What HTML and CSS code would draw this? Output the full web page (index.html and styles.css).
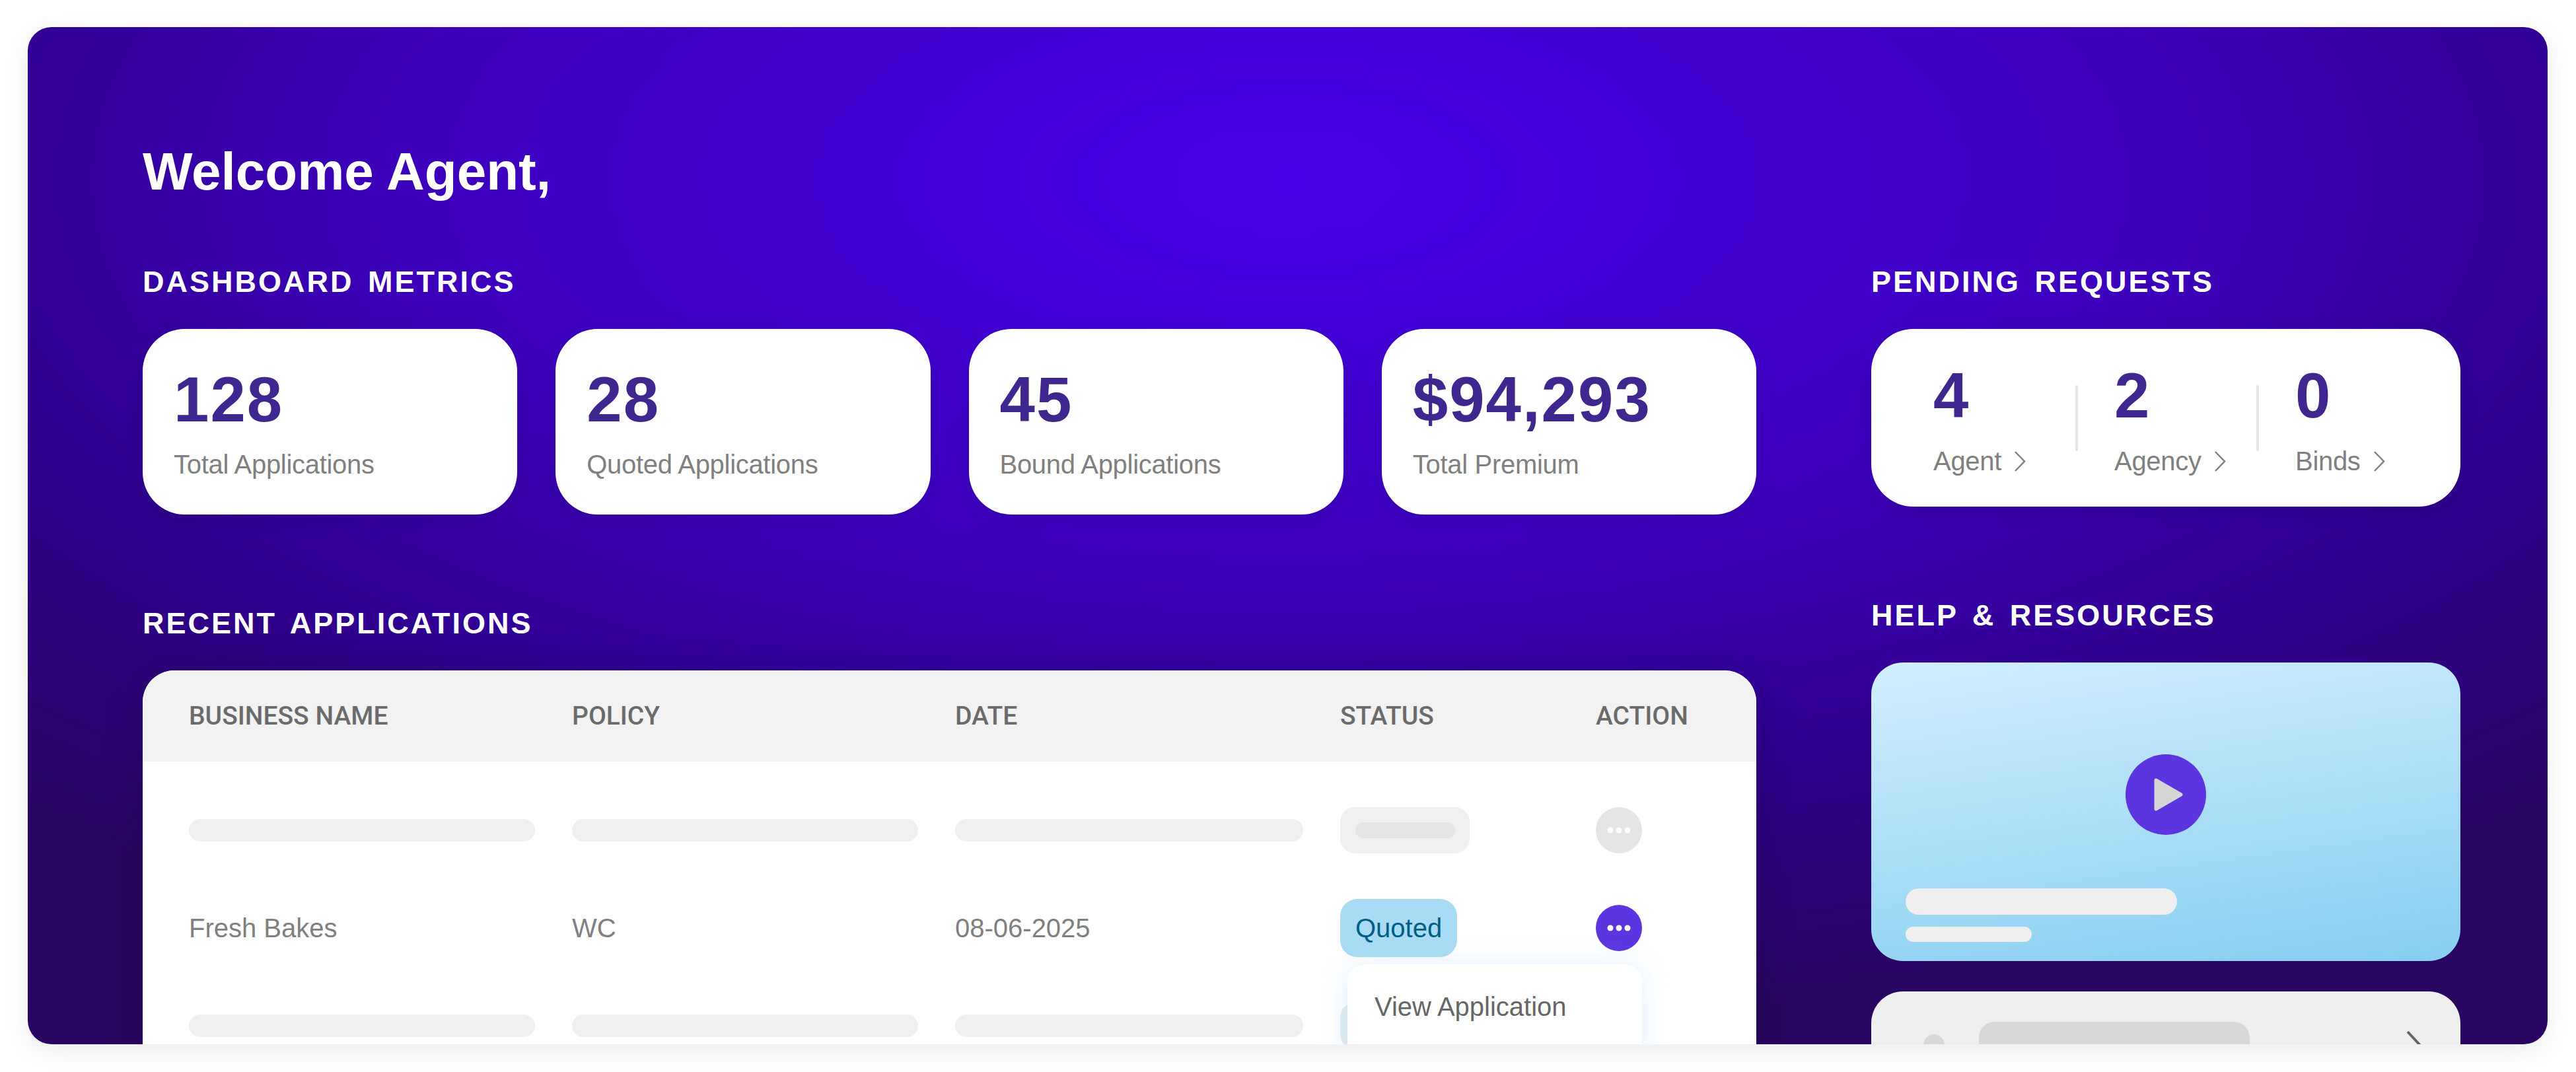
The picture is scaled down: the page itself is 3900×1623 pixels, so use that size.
FILE: index.html
```html
<!DOCTYPE html>
<html lang="en">
<head>
    <meta charset="UTF-8">
    <meta name="viewport" content="width=device-width, initial-scale=1.0">
    <title>Agent dashboard</title>
    <link rel="stylesheet" href="styles.css">
</head>
<body>
    <div class="frame">
        <div class="left-col">
            <h1 class="welcome">Welcome Agent,</h1>
            <h2 class="section-title">DASHBOARD METRICS</h2>
            <div class="metrics">
                <div class="metric-card">
                    <div class="metric-value">128</div>
                    <div class="metric-label">Total Applications</div>
                </div>
                <div class="metric-card">
                    <div class="metric-value">28</div>
                    <div class="metric-label">Quoted Applications</div>
                </div>
                <div class="metric-card">
                    <div class="metric-value">45</div>
                    <div class="metric-label">Bound Applications</div>
                </div>
                <div class="metric-card">
                    <div class="metric-value">$94,293</div>
                    <div class="metric-label">Total Premium</div>
                </div>
            </div>

            <h2 class="section-title section-title-lower">RECENT APPLICATIONS</h2>
            <div class="table-card">
                <div class="table-head table-grid">
                    <div>BUSINESS NAME</div>
                    <div>POLICY</div>
                    <div>DATE</div>
                    <div>STATUS</div>
                    <div>ACTION</div>
                </div>
                <div class="table-body">
                    <div class="table-row table-grid">
                        <div class="skeleton-bar"></div>
                        <div class="skeleton-bar"></div>
                        <div class="skeleton-bar"></div>
                        <div class="skeleton-pill"><div class="skeleton-pill-inner"></div></div>
                        <div class="action-btn action-btn-off">
                            <svg width="36" height="10" viewBox="0 0 36 10"><circle cx="5" cy="5" r="4.5" fill="#fff"/><circle cx="18" cy="5" r="4.5" fill="#fff"/><circle cx="31" cy="5" r="4.5" fill="#fff"/></svg>
                        </div>
                    </div>
                    <div class="table-row table-grid">
                        <div>Fresh Bakes</div>
                        <div>WC</div>
                        <div>08-06-2025</div>
                        <div class="status-quoted">Quoted</div>
                        <div class="action-btn">
                            <svg width="36" height="10" viewBox="0 0 36 10"><circle cx="5" cy="5" r="4.5" fill="#fff"/><circle cx="18" cy="5" r="4.5" fill="#fff"/><circle cx="31" cy="5" r="4.5" fill="#fff"/></svg>
                        </div>
                    </div>
                    <div class="table-row table-grid">
                        <div class="skeleton-bar"></div>
                        <div class="skeleton-bar"></div>
                        <div class="skeleton-bar"></div>
                        <div class="skeleton-pill skeleton-pill-tint"></div>
                        <div></div>
                    </div>
                </div>
                <div class="row-menu">
                    <div class="row-menu-item">View Application</div>
                </div>
            </div>
        </div>

        <div class="right-col">
            <h2 class="section-title">PENDING REQUESTS</h2>
            <div class="pending-card">
                <div class="pending-item">
                    <div class="metric-value">4</div>
                    <div class="pending-label">Agent
                        <svg width="18" height="31" viewBox="0 0 18 31"><path d="M2 1 L16 15.5 L2 30" fill="none" stroke="#808080" stroke-width="2.5"/></svg>
                    </div>
                </div>
                <div class="pending-divider"></div>
                <div class="pending-item">
                    <div class="metric-value">2</div>
                    <div class="pending-label">Agency
                        <svg width="18" height="31" viewBox="0 0 18 31"><path d="M2 1 L16 15.5 L2 30" fill="none" stroke="#808080" stroke-width="2.5"/></svg>
                    </div>
                </div>
                <div class="pending-divider"></div>
                <div class="pending-item">
                    <div class="metric-value">0</div>
                    <div class="pending-label">Binds
                        <svg width="18" height="31" viewBox="0 0 18 31"><path d="M2 1 L16 15.5 L2 30" fill="none" stroke="#808080" stroke-width="2.5"/></svg>
                    </div>
                </div>
            </div>

            <h2 class="section-title section-title-lower">HELP &amp; RESOURCES</h2>
            <div class="video-card">
                <div class="play-wrap">
                    <div class="play-btn">
                        <svg width="44" height="50" viewBox="0 0 44 50"><path d="M3 3 L41 25 L3 47 Z" fill="#d6d6d6" stroke="#d6d6d6" stroke-width="5" stroke-linejoin="round"/></svg>
                    </div>
                </div>
                <div class="video-bar"></div>
                <div class="video-bar video-bar-small"></div>
            </div>
            <div class="resource-card">
                <div class="resource-dot"></div>
                <div class="resource-bar"></div>
                <svg class="resource-chevron" width="30" height="60" viewBox="0 0 30 60"><path d="M2 2 L28 30 L2 58" fill="none" stroke="#666" stroke-width="4"/></svg>
            </div>
        </div>
    </div>
</body>
</html>
```

FILE: styles.css
```css
html, body {
    height: 100%;
    margin: 0;
}
body {
    font-family: "Liberation Sans", Arial, sans-serif;
    background-color: #fff;
    padding: 41px 43px 42px 42px;
    box-sizing: border-box;
    overflow: hidden;
}
.frame {
    height: 100%;
    box-sizing: border-box;
    padding: 173px 132px 0 174px;
    display: flex;
    gap: 174px;
    overflow: hidden;
    border-radius: 36px;
    background: radial-gradient(ellipse 2900px 1300px at 1908px 232px, #4800ea 0%, #3c00bc 45%, #300090 70%, #280560 100%);
    box-shadow: 0 10px 40px rgba(0,0,0,0.08);
}
.left-col {
    width: 2443px;
    flex: none;
}
.right-col {
    width: 892px;
    flex: none;
    padding-top: 187px;
}
.welcome {
    margin: 0 0 95px 0;
    font-size: 80px;
    line-height: 92px;
    font-weight: bold;
    color: #fff;
}
.section-title {
    margin: 0 0 45px 0;
    font-size: 45px;
    line-height: 52px;
    font-weight: bold;
    letter-spacing: 3px;
    word-spacing: 6px;
    color: #fff;
}
.section-title-lower {
    margin-top: 139px;
}
.metrics {
    display: flex;
    gap: 58px;
}
.metric-card {
    flex: 1;
    height: 281px;
    box-sizing: border-box;
    padding: 59px 47px 0 47px;
    background: white;
    border-radius: 64px;
    box-shadow: 0 6px 30px rgba(0,0,0,0.12);
}
.metric-value {
    font-size: 96px;
    line-height: 96px;
    font-weight: bold;
    letter-spacing: 2px;
    color: #3f278f;
}
.metric-label {
    margin-top: 26px;
    font-size: 40px;
    line-height: 48px;
    letter-spacing: -0.3px;
    color: #808080;
}

/* recent applications */
.table-card {
    position: relative;
    background: white;
    border-radius: 48px 48px 0 0;
    height: 700px;
    box-shadow: 0 0 60px rgba(0,0,0,0.18);
}
.table-grid {
    display: grid;
    grid-template-columns: 524px 524px 527px 331px 70px;
    column-gap: 56px;
    padding-left: 70px;
    align-items: center;
}
.table-head {
    height: 138px;
    background: #f2f2f2;
    border-radius: 48px 48px 0 0;
    font-family: Roboto, "Liberation Sans", sans-serif;
    font-size: 39px;
    font-weight: 500;
    color: #6b6b6b;
}
.table-body {
    padding-top: 30px;
}
.table-row {
    height: 148px;
    font-size: 40px;
    color: #808080;
}
.skeleton-bar {
    height: 34px;
    border-radius: 17px;
    background: #f0f0f0;
}
.skeleton-pill {
    width: 196px;
    height: 70px;
    border-radius: 22px;
    background: #f0f0f0;
    display: flex;
    align-items: center;
    justify-content: center;
}
.skeleton-pill-tint {
    background: #e3edf1;
}
.skeleton-pill-inner {
    width: 151px;
    height: 24px;
    border-radius: 12px;
    background: #e5e5e5;
}
.status-quoted {
    justify-self: start;
    height: 88px;
    line-height: 88px;
    padding: 0 23px;
    border-radius: 26px;
    background: #a9dcf4;
    color: #005e87;
}
.action-btn {
    width: 70px;
    height: 70px;
    border-radius: 50%;
    background: #5c35e0;
    display: flex;
    align-items: center;
    justify-content: center;
}
.action-btn-off {
    background: #e5e5e5;
}
.row-menu {
    position: absolute;
    left: 1824px;
    top: 445px;
    width: 446px;
    height: 300px;
    box-sizing: border-box;
    padding: 40px 41px;
    background: white;
    border-radius: 26px;
    box-shadow: 0 0 40px rgba(140,200,240,0.25);
}
.row-menu-item {
    font-size: 40px;
    line-height: 48px;
    color: #666;
}

/* pending requests */
.pending-card {
    height: 269px;
    box-sizing: border-box;
    display: flex;
    padding: 53px 0 0 94px;
    background: white;
    border-radius: 64px;
    box-shadow: 0 6px 30px rgba(0,0,0,0.12);
}
.pending-item {
    width: 215px;
    flex: none;
}
.pending-label {
    margin-top: 27px;
    display: flex;
    align-items: center;
    gap: 19px;
    font-size: 40px;
    line-height: 48px;
    letter-spacing: -0.3px;
    color: #808080;
}
.pending-divider {
    width: 4px;
    height: 100px;
    margin: 32px 55px 0 0;
    border-radius: 2px;
    background: #e5e5e5;
}

/* help and resources */
.video-card {
    height: 452px;
    box-sizing: border-box;
    padding: 342px 52px 0 52px;
    position: relative;
    border-radius: 48px;
    background: linear-gradient(172deg, #d2effd 0%, #86cef0 100%);
}
.play-wrap {
    position: absolute;
    left: 0;
    right: 0;
    top: 139px;
    display: flex;
    justify-content: center;
}
.play-btn {
    width: 122px;
    height: 122px;
    padding-left: 8px;
    box-sizing: border-box;
    border-radius: 50%;
    background: #5c35e0;
    display: flex;
    align-items: center;
    justify-content: center;
}
.video-bar {
    width: 411px;
    height: 40px;
    border-radius: 20px;
    background: #efefef;
}
.video-bar-small {
    width: 191px;
    height: 23px;
    margin-top: 18px;
    border-radius: 12px;
}
.resource-card {
    height: 300px;
    margin-top: 46px;
    box-sizing: border-box;
    display: flex;
    align-items: flex-start;
    padding: 46px 52px 0 79px;
    border-radius: 48px;
    background: #efefef;
}
.resource-dot {
    width: 32px;
    height: 32px;
    margin-top: 19px;
    border-radius: 50%;
    background: #d7d7d7;
    flex: none;
}
.resource-bar {
    width: 410px;
    height: 60px;
    margin-left: 52px;
    border-radius: 24px;
    background: #d7d7d7;
    flex: none;
}
.resource-chevron {
    margin: 13px 0 0 237px;
    flex: none;
}
```
